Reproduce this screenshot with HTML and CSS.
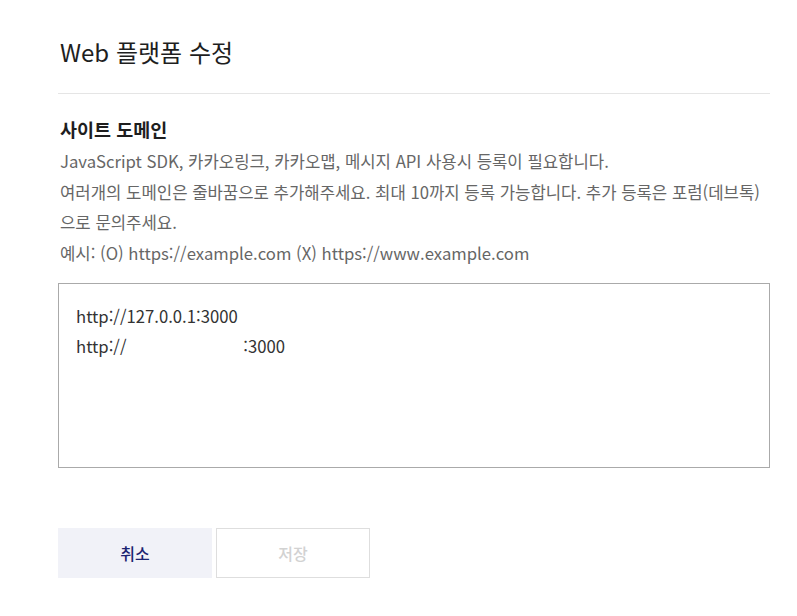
FILE: index.html
```html
<!DOCTYPE html>
<html lang="ko">
<head>
  <meta charset="UTF-8">
  <title>Web 플랫폼 수정</title>
  <link rel="stylesheet" href="styles.css">
</head>
<body>
  <div class="modal">
    <h1 class="modal-title">Web 플랫폼 수정</h1>

    <div class="field">
      <h2 class="field-title">사이트 도메인</h2>
      <p class="field-desc">
        JavaScript SDK, 카카오링크, 카카오맵, 메시지 API 사용시 등록이 필요합니다.<br>
        여러개의 도메인은 줄바꿈으로 추가해주세요. 최대 10까지 등록 가능합니다. 추가 등록은 포럼(데브톡)으로 문의주세요.<br>
        예시: (O) https://example.com (X) https://www.example.com
      </p>
      <textarea class="domain-input">http://127.0.0.1:3000
http://                         :3000</textarea>
    </div>

    <div class="actions">
      <button class="btn btn-cancel">취소</button>
      <button class="btn btn-save" disabled>저장</button>
    </div>
  </div>
</body>
</html>
```

FILE: styles.css
```css
body {
  margin: 0;
  background: #fff;
  font-family: "Noto Sans CJK KR", "Noto Sans", sans-serif;
  color: #222;
}

.modal {
  width: 712px;
  padding: 0 0 0 58px;
}

.modal-title {
  margin: 0;
  padding: 35px 0 24px 2px;
  font-size: 24px;
  font-weight: 400;
  line-height: 34px;
  color: #1e1e1e;
  border-bottom: 1px solid #e5e5e5;
}

.field {
  padding-top: 20px;
}

.field-title {
  margin: 0 0 2px 2px;
  font-size: 18.5px;
  font-weight: 700;
  line-height: 30px;
  color: #1e1e1e;
}

.field-desc {
  margin: 0 0 0 2px;
  font-size: 16.7px;
  line-height: 30.5px;
  color: #666;
}

.domain-input {
  display: block;
  box-sizing: border-box;
  width: 712px;
  height: 185px;
  margin-top: 15px;
  padding: 17px 17px;
  border: 1px solid #aaa;
  border-radius: 0;
  resize: none;
  font-family: "Noto Sans CJK KR", "Noto Sans", sans-serif;
  font-size: 16.7px;
  line-height: 30px;
  color: #333;
  outline: none;
}

.actions {
  display: flex;
  gap: 4px;
  margin-top: 60px;
}

.btn {
  width: 154px;
  height: 50px;
  font-family: "Noto Sans CJK KR", "Noto Sans", sans-serif;
  font-size: 16px;
  font-weight: 500;
  cursor: pointer;
}

.btn-cancel {
  border: none;
  background-color: #f1f2f8;
  color: #1b2471;
}

.btn-save {
  border: 1px solid #dedede;
  background-color: #fff;
  color: #d2d2d2;
}
```
